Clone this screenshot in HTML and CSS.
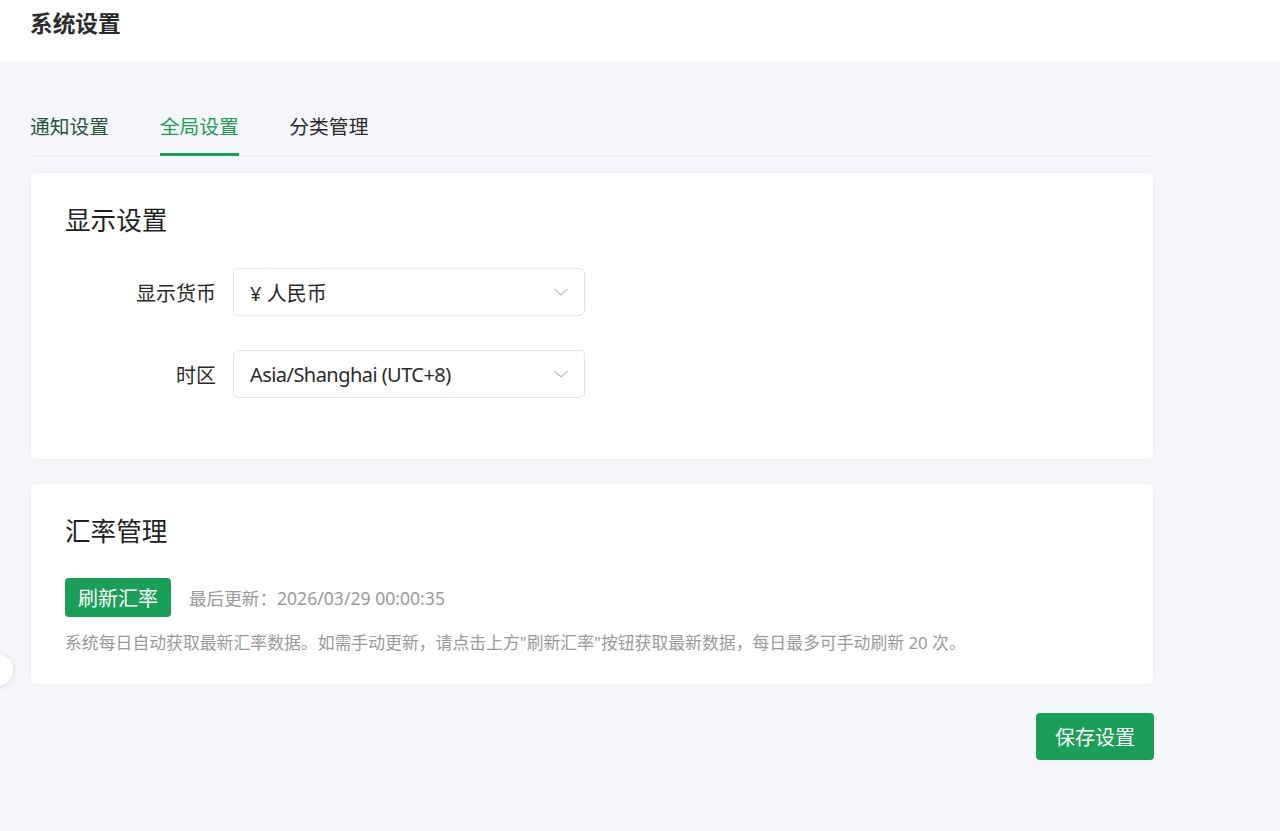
FILE: index.html
```html
<!DOCTYPE html>
<html lang="zh-CN">
<head>
<meta charset="utf-8">
<title>系统设置</title>
<link rel="stylesheet" href="styles.css">
</head>
<body>
<header class="topbar">
  <h1 class="page-title">系统设置</h1>
</header>
<main class="main">
  <div class="container">
    <nav class="tabs">
      <div class="tab tab-visited">通知设置</div>
      <div class="tab tab-active">全局设置</div>
      <div class="tab">分类管理</div>
    </nav>

    <section class="card card-display">
      <h2 class="card-title">显示设置</h2>
      <div class="form-row">
        <label class="form-label">显示货币</label>
        <div class="select">
          <span class="select-value">¥ 人民币</span>
          <svg class="chevron" width="16" height="16" viewBox="0 0 16 16"><path d="M1.5 4.8 L8 11 L14.5 4.8" fill="none" stroke="#b4b7bd" stroke-width="1.1"/></svg>
        </div>
      </div>
      <div class="form-row">
        <label class="form-label">时区</label>
        <div class="select">
          <span class="select-value select-latin">Asia/Shanghai (UTC+8)</span>
          <svg class="chevron" width="16" height="16" viewBox="0 0 16 16"><path d="M1.5 4.8 L8 11 L14.5 4.8" fill="none" stroke="#b4b7bd" stroke-width="1.1"/></svg>
        </div>
      </div>
    </section>

    <section class="card card-rate">
      <h2 class="card-title">汇率管理</h2>
      <div class="rate-row">
        <button class="btn btn-small">刷新汇率</button>
        <span class="update-time">最后更新：2026/03/29 00:00:35</span>
      </div>
      <p class="hint">系统每日自动获取最新汇率数据。如需手动更新，请点击上方"刷新汇率"按钮获取最新数据，每日最多可手动刷新 20 次。</p>
    </section>

    <div class="actions">
      <button class="btn btn-large">保存设置</button>
    </div>
  </div>
</main>
<div class="float-handle"></div>
</body>
</html>
```

FILE: styles.css
```css
* { box-sizing: border-box; }

html, body {
  margin: 0;
  padding: 0;
}

body {
  background: #f5f6fa;
  font-family: "Noto Sans", "Noto Sans CJK SC", sans-serif;
  color: #222;
  min-height: 831px;
  overflow: hidden;
}

.topbar {
  height: 63px;
  background: #ffffff;
  border-bottom: 1px solid #eceef2;
  padding: 8px 30px 0;
}

.page-title {
  margin: 0;
  font-size: 22.7px;
  line-height: 32px;
  font-weight: 700;
  color: #2b2b2b;
}

.main {
  padding: 50px 0 40px 30px;
}

.container {
  width: 1124px;
}

.tabs {
  display: flex;
  gap: 50.5px;
  border-bottom: 1px solid #e8eaee;
}

.tab {
  font-size: 19.8px;
  line-height: 28px;
  padding-bottom: 12px;
  margin-bottom: -1px;
  border-bottom: 3px solid transparent;
  color: #2a2a2a;
}

.tab-visited {
  color: #27563f;
}

.tab-active {
  color: #1f9d57;
  border-bottom-color: #1a9f55;
}

.card {
  background: #ffffff;
  border: 1px solid #eef0f3;
  border-radius: 6px;
  padding: 30px 34px 29px;
}

.card-display {
  margin-top: 16px;
  padding-bottom: 61px;
}

.card-rate {
  margin-top: 23px;
}

.card-title {
  margin: 0 0 29px;
  font-size: 25.6px;
  line-height: 36px;
  font-weight: 400;
  color: #1f1f1f;
}

.card-rate .card-title {
  margin-bottom: 28px;
}

.form-row {
  display: flex;
  align-items: center;
}

.form-row + .form-row {
  margin-top: 34px;
}

.form-label {
  width: 168px;
  padding-right: 17px;
  text-align: right;
  font-size: 20px;
  color: #2a2a2a;
}

.select {
  width: 352px;
  height: 48px;
  border: 1px solid #e3e5e9;
  border-radius: 5px;
  display: flex;
  align-items: center;
  justify-content: space-between;
  padding: 0 15px 0 16px;
}

.select-value {
  font-size: 20px;
  color: #2a2a2a;
}

.select-latin {
  letter-spacing: -0.55px;
}

.chevron {
  display: block;
}

.rate-row {
  display: flex;
  align-items: center;
  gap: 18px;
}

.btn {
  font-family: inherit;
  border: none;
  background: #1a9f57;
  color: #ffffff;
  border-radius: 4px;
  cursor: pointer;
}

.btn-small {
  height: 39px;
  padding: 0 13px;
  font-size: 20px;
}

.update-time {
  font-size: 17.6px;
  color: #9a9a9a;
}

.hint {
  margin: 14px 0 0;
  font-size: 16.85px;
  line-height: 24px;
  color: #9a9a9a;
}

.actions {
  display: flex;
  justify-content: flex-end;
  margin-top: 28px;
}

.btn-large {
  width: 118px;
  height: 47px;
  font-size: 20px;
}

.float-handle {
  position: fixed;
  left: -19px;
  top: 654px;
  width: 32px;
  height: 32px;
  border-radius: 50%;
  background: #ffffff;
  box-shadow: 0 1px 6px rgba(0, 0, 0, 0.12);
}
```
